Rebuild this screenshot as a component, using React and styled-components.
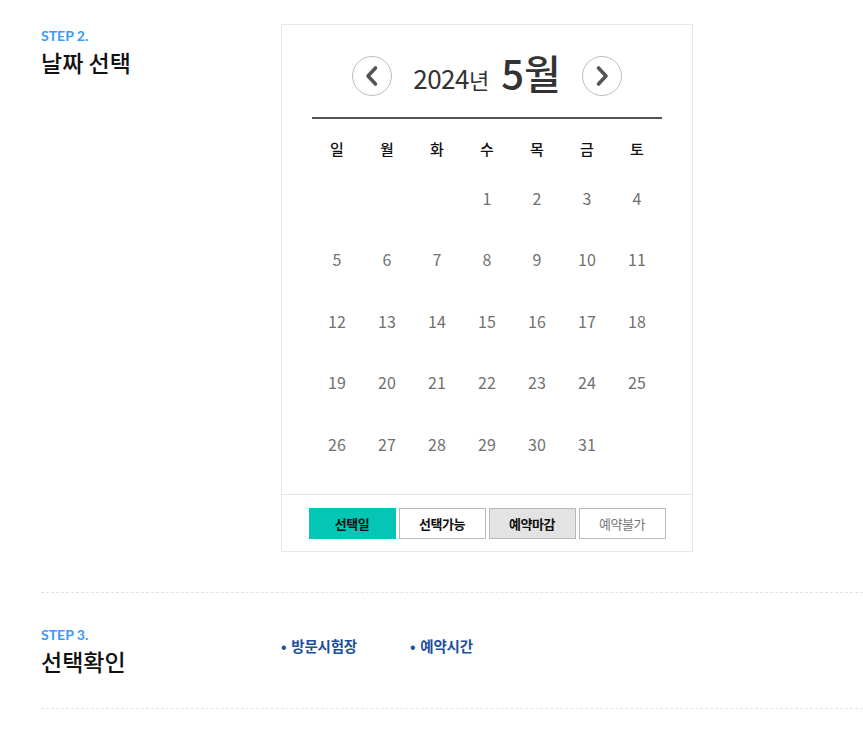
import React from "react";
import styled, { createGlobalStyle } from "styled-components";

const GlobalStyle = createGlobalStyle`
  body {
    margin: 0;
    background: #fff;
    font-family: "Noto Sans CJK KR", "Noto Sans", sans-serif;
    color: #222;
  }
  * {
    box-sizing: border-box;
  }
`;

const Page = styled.div`
  padding-left: 41px;
  width: 863px;
`;

const Section = styled.section`
  display: flex;
  padding: ${(p) => p.$pad};
  border-bottom: 1px dashed #e4e4e4;
`;

const Heading = styled.div`
  width: 240px;
  flex-shrink: 0;
  padding-top: ${(p) => p.$top || 0}px;
`;

const Step = styled.div`
  font-family: "Lato", "Noto Sans CJK KR", sans-serif;
  font-weight: 700;
  font-size: 14px;
  color: #3a9af4;
  line-height: 18px;
`;

const Title = styled.h2`
  margin: 2px 0 0;
  font-size: 23px;
  font-weight: 500;
  color: #111;
  line-height: 30px;
`;

const CalendarBox = styled.div`
  width: 412px;
  border: 1px solid #e6e6e6;
`;

const Nav = styled.div`
  display: flex;
  align-items: center;
  justify-content: center;
  padding-top: 30px;
  height: 72px;
`;

const NavButton = styled.button`
  width: 40px;
  height: 40px;
  border-radius: 50%;
  border: 1px solid #bdbdbd;
  background: #fff;
  display: flex;
  align-items: center;
  justify-content: center;
  padding: 0;
  cursor: pointer;
`;

const MonthLabel = styled.div`
  width: 190px;
  display: flex;
  align-items: baseline;
  justify-content: center;
  color: #333;
  line-height: 1;
  margin-bottom: 8px;
`;

const Year = styled.span`
  font-size: 26px;
  letter-spacing: -0.5px;
`;

const YearUnit = styled.span`
  font-size: 22px;
  margin-right: 12px;
`;

const Month = styled.span`
  font-size: 40px;
  font-weight: 500;
`;

const Divider = styled.div`
  width: 350px;
  height: 2px;
  background: #555;
  margin: 20px auto 0;
`;

const Grid = styled.div`
  width: 350px;
  margin: 0 auto;
  display: grid;
  grid-template-columns: repeat(7, 50px);
  padding: 10px 0 19px;
`;

const WeekDay = styled.div`
  height: 38px;
  display: flex;
  align-items: center;
  justify-content: center;
  font-size: 15px;
  font-weight: 500;
  color: #111;
`;

const Day = styled.div`
  height: 61.5px;
  display: flex;
  align-items: center;
  justify-content: center;
  font-size: 16px;
  color: #707070;
  font-weight: 400;
`;

const Legend = styled.div`
  border-top: 1px solid #e6e6e6;
  display: flex;
  justify-content: center;
  gap: 3px;
  padding: 13px 0 12px;
`;

const LegendItem = styled.div`
  width: 87px;
  height: 31px;
  display: flex;
  align-items: center;
  justify-content: center;
  font-size: 13px;
  font-weight: ${(p) => (p.$kind === "disabled" ? 400 : 700)};
  letter-spacing: -0.5px;
  color: ${(p) => (p.$kind === "disabled" ? "#777" : "#111")};
  background: ${(p) =>
    p.$kind === "selected" ? "#05c5b5" : p.$kind === "closed" ? "#e3e3e3" : "#fff"};
  border: ${(p) => (p.$kind === "selected" ? "none" : "1px solid #b8b8b8")};
`;

const InfoList = styled.ul`
  list-style: none;
  margin: 0;
  padding: 9px 0 0;
  display: flex;
`;

const InfoItem = styled.li`
  width: 129px;
  font-size: 14.5px;
  font-weight: 700;
  color: #1e4f9c;
  letter-spacing: -0.2px;
  &::before {
    content: "•";
    margin-right: 5px;
  }
`;

const Chevron = ({ dir }) => (
  <svg width="16" height="22" viewBox="0 0 16 22">
    <path
      d={dir === "left" ? "M11.5 3 L4 11 L11.5 19" : "M4.5 3 L12 11 L4.5 19"}
      fill="none"
      stroke="#555"
      strokeWidth="3.6"
      strokeLinecap="round"
      strokeLinejoin="round"
    />
  </svg>
);

const weekDays = ["일", "월", "화", "수", "목", "금", "토"];
const days = [null, null, null, ...Array.from({ length: 31 }, (_, i) => i + 1)];

export default function App() {
  return (
    <Page>
      <GlobalStyle />
      <Section $pad="24px 0 40px">
        <Heading $top={3}>
          <Step>STEP 2.</Step>
          <Title>날짜 선택</Title>
        </Heading>
        <CalendarBox>
          <Nav>
            <NavButton aria-label="이전 달">
              <Chevron dir="left" />
            </NavButton>
            <MonthLabel>
              <Year>2024</Year>
              <YearUnit>년</YearUnit>
              <Month>5월</Month>
            </MonthLabel>
            <NavButton aria-label="다음 달">
              <Chevron dir="right" />
            </NavButton>
          </Nav>
          <Divider />
          <Grid>
            {weekDays.map((d) => (
              <WeekDay key={d}>{d}</WeekDay>
            ))}
            {days.map((d, i) => (
              <Day key={i}>{d}</Day>
            ))}
          </Grid>
          <Legend>
            <LegendItem $kind="selected">선택일</LegendItem>
            <LegendItem $kind="available">선택가능</LegendItem>
            <LegendItem $kind="closed">예약마감</LegendItem>
            <LegendItem $kind="disabled">예약불가</LegendItem>
          </Legend>
        </CalendarBox>
      </Section>
      <Section $pad="33px 0 32px">
        <Heading>
          <Step>STEP 3.</Step>
          <Title>선택확인</Title>
        </Heading>
        <InfoList>
          <InfoItem>방문시험장</InfoItem>
          <InfoItem>예약시간</InfoItem>
        </InfoList>
      </Section>
    </Page>
  );
}
